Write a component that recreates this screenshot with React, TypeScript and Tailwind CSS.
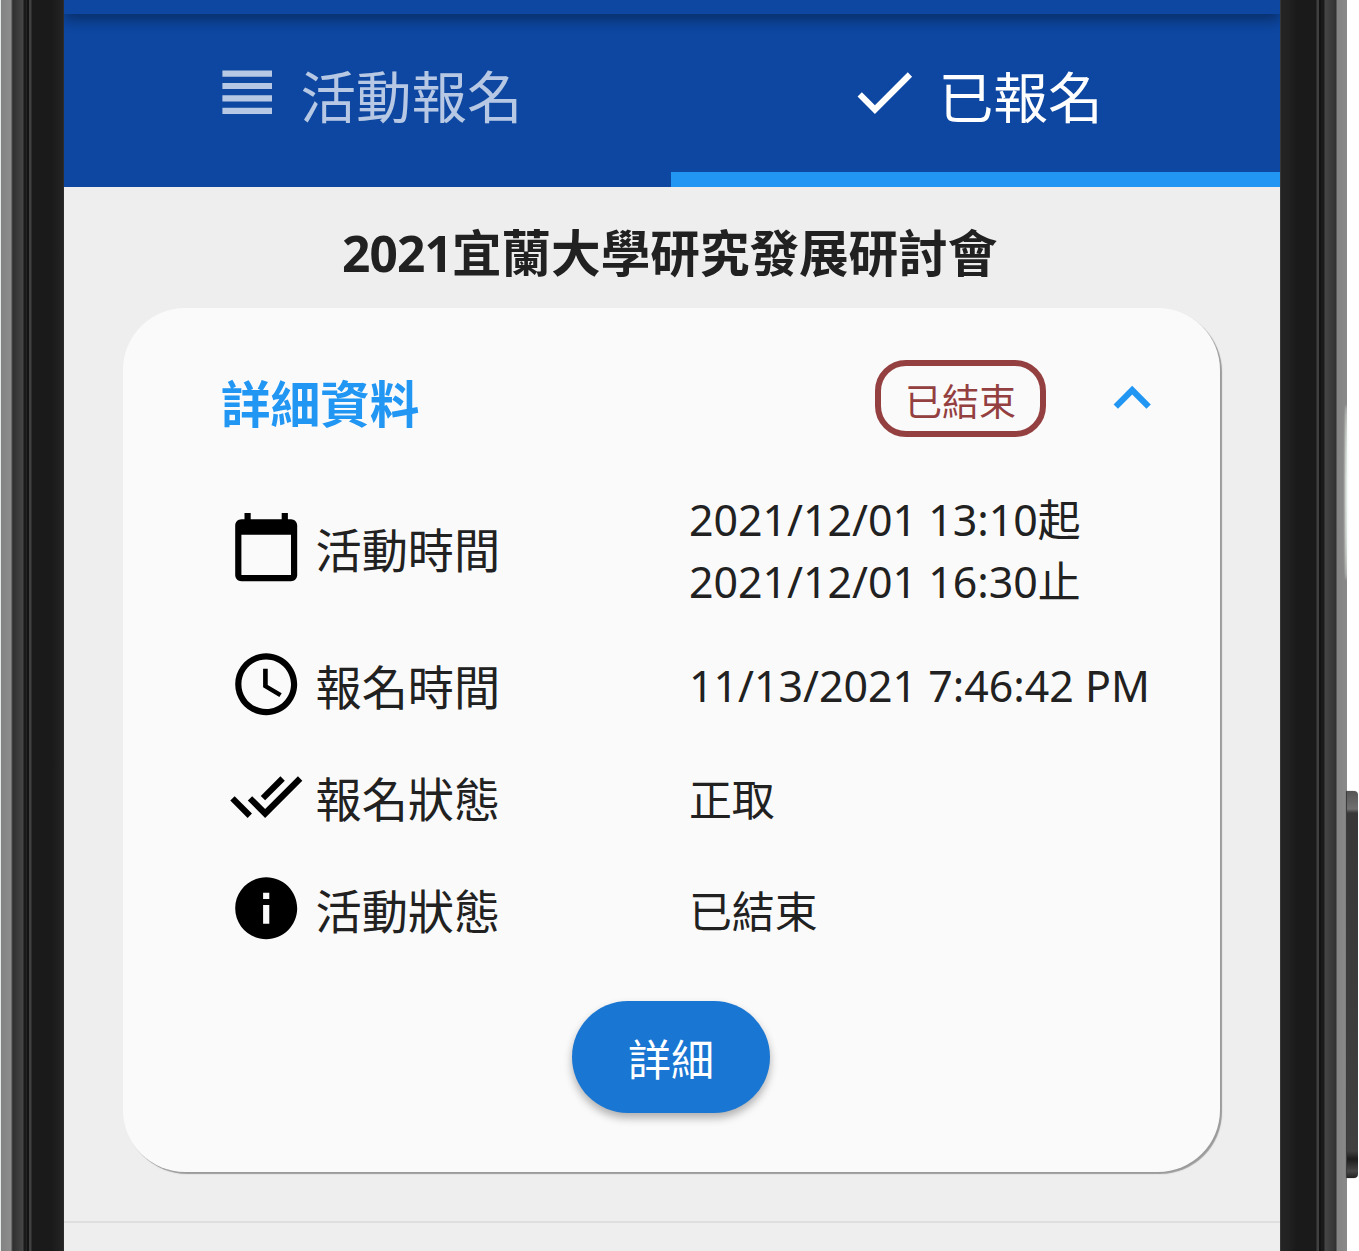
import type { ReactNode } from "react";

const ICONS = {
  headline: "M4 15h16v-2H4v2zm0 4h16v-2H4v2zm0-8h16V9H4v2zm0-6v2h16V5H4z",
  check: "M9 16.2L4.8 12l-1.4 1.4L9 19 21 7l-1.4-1.4L9 16.2z",
  expandLess: "M12 8l-6 6 1.41 1.41L12 10.83l4.59 4.58L18 14z",
  calendar:
    "M20 3h-1V1h-2v2H7V1H5v2H4c-1.1 0-2 .9-2 2v16c0 1.1.9 2 2 2h16c1.1 0 2-.9 2-2V5c0-1.1-.9-2-2-2zm0 18H4V8h16v13z",
  clock:
    "M11.99 2C6.47 2 2 6.48 2 12s4.47 10 9.99 10C17.52 22 22 17.52 22 12S17.52 2 11.99 2zM12 20c-4.42 0-8-3.58-8-8s3.58-8 8-8 8 3.58 8 8-3.58 8-8 8zm-.5-13H11v6l5.25 3.15.75-1.23-4.5-2.67V7z",
  doneAll:
    "M18 7l-1.41-1.41-6.34 6.34 1.41 1.41L18 7zm4.24-1.41L11.66 16.17 7.48 12l-1.41 1.41L11.66 19l12-12-1.42-1.41zM.41 13.41L6 19l1.41-1.41L1.83 12 .41 13.41z",
  info: "M12 2C6.48 2 2 6.48 2 12s4.48 10 10 10 10-4.48 10-10S17.52 2 12 2zm1 15h-2v-6h2v6zm0-8h-2V7h2v2z",
};

function Icon({ name, className = "" }: { name: keyof typeof ICONS; className?: string }) {
  return (
    <svg viewBox="0 0 24 24" fill="currentColor" className={`size-[74.4px] shrink-0 ${className}`}>
      <path d={ICONS[name]} />
    </svg>
  );
}

function InfoRow({
  icon,
  label,
  height,
  valuePadding,
  children,
}: {
  icon: keyof typeof ICONS;
  label: string;
  height: string;
  valuePadding: string;
  children: ReactNode;
}) {
  return (
    <div className={`flex items-center ${height}`}>
      <Icon name={icon} className="text-black" />
      <div className="ml-[12.6px] w-[373.4px] pt-[7px] text-[46.2px] leading-[62px]">{label}</div>
      <div className={`whitespace-nowrap text-[42.9px] leading-[62px] ${valuePadding}`}>{children}</div>
    </div>
  );
}

export default function App() {
  return (
    <div className="flex h-[1251px] w-[1359px] overflow-hidden bg-white font-['Noto_Sans','Noto_Sans_CJK_TC',sans-serif] text-[#212121]">
      <div className="w-[64px] shrink-0 bg-[linear-gradient(90deg,#e4eae7_0_1px,#838383_1px,#8c8c8c_11px,#4a4a4a_12px,#303030_13px,#464646_23px,#1a1a1a_24px_26px,#242424_26px_27px,#131313_27px_29px,#404040_29px_31px,#1a1a1a_32px_52px,#242424_63px,#333_64px)]" />

      <main className="flex w-[1216px] shrink-0 flex-col bg-[#eeeeee]">
        <div className="relative z-10 h-[14px] shrink-0 bg-[#0d47a1] shadow-[0_5px_14px_rgba(0,0,0,0.42)] [clip-path:inset(0_0_-30px_0)]" />
        <nav className="flex h-[173px] shrink-0 bg-[#0d47a1]">
          <div className="flex w-[607px] items-start pl-[145.6px] pt-[41px] text-white/70">
            <Icon name="headline" />
            <span className="ml-[16.5px] mt-[2px] text-[55.5px] leading-[80px]">活動報名</span>
          </div>
          <div className="flex w-[609px] items-start border-b-[15px] border-[#2196f3] pl-[176px] pt-[41px] text-white">
            <Icon name="check" />
            <span className="ml-[17px] mt-[2px] text-[54.8px] leading-[80px]">已報名</span>
          </div>
        </nav>

        <h1 className="mt-[30px] h-[91px] pl-[278px] text-[49.6px] font-bold leading-[72px]">
          <span className="tracking-[-0.9px]">2021</span>宜蘭大學研究發展研討會
        </h1>

        <section className="ml-[59px] flex h-[864px] w-[1097px] shrink-0 flex-col rounded-[62px] bg-[#fafafa] shadow-[2px_2px_1px_0px_#9b9b9b]">
          <header className="flex h-[158px] items-start pl-[98px] pt-[52px]">
            <h2 className="mt-[8px] w-[654px] text-[49.6px] font-bold leading-[72px] text-[#2196f3]">詳細資料</h2>
            <div className="flex h-[77px] w-[171px] items-center justify-center rounded-[31px] border-[6px] border-[#943f40] pt-[7px] text-[37px] leading-[50px] text-[#943f40]">
              已結束
            </div>
            <Icon name="expandLess" className="ml-[48.5px] mt-[1px] text-[#2196f3]" />
          </header>
          <div className="flex flex-col pl-[105.5px]">
            <InfoRow icon="calendar" label="活動時間" height="h-[162px]" valuePadding="pt-[8px]">
              2021/12/01 13:10起
              <br />
              2021/12/01 16:30止
            </InfoRow>
            <InfoRow icon="clock" label="報名時間" height="h-[112px]" valuePadding="pt-[4px]">
              11/13/2021 7:46:42 PM
            </InfoRow>
            <InfoRow icon="doneAll" label="報名狀態" height="h-[112px]" valuePadding="pt-[8px]">
              正取
            </InfoRow>
            <InfoRow icon="info" label="活動狀態" height="h-[112px]" valuePadding="pt-[8px]">
              已結束
            </InfoRow>
          </div>
          <button className="ml-[449px] mt-[37px] flex h-[112px] w-[198px] items-center justify-center rounded-full bg-[#1976d2] pt-[6px] text-[43px] leading-[62px] text-white shadow-[0_5px_8px_rgba(0,0,0,0.3)]">
            詳細
          </button>
        </section>
        <div className="mt-[49px] h-[2px] shrink-0 bg-[#dfdfdf]" />
      </main>

      <div className="w-[67px] shrink-0 bg-[linear-gradient(90deg,#4a4a4a_0,#242424_1px,#222_8px,#1a1a1a_16px_36px,#404040_37px_39px,#131313_39px_41px,#1a1a1a_41px_44px,#464646_45px,#363636_54px,#303030_56px,#838383_57px,#8a8a8a_67px)]" />
      <div className="relative w-[12px] shrink-0">
        <div className="absolute left-[-2px] top-[405px] h-[175px] w-[3px] rounded-[50%] bg-[#edf5ef] blur-[1px]" />
        <div className="mt-[791px] h-[387px] w-[11px] rounded-r-[4px] bg-[linear-gradient(180deg,#555_0,#707070_18px,#383838_22px,#404040_360px,#1c1c1c_368px,#484848_380px,#222_387px)] shadow-[-1px_0_1px_#333]" />
      </div>
    </div>
  );
}
